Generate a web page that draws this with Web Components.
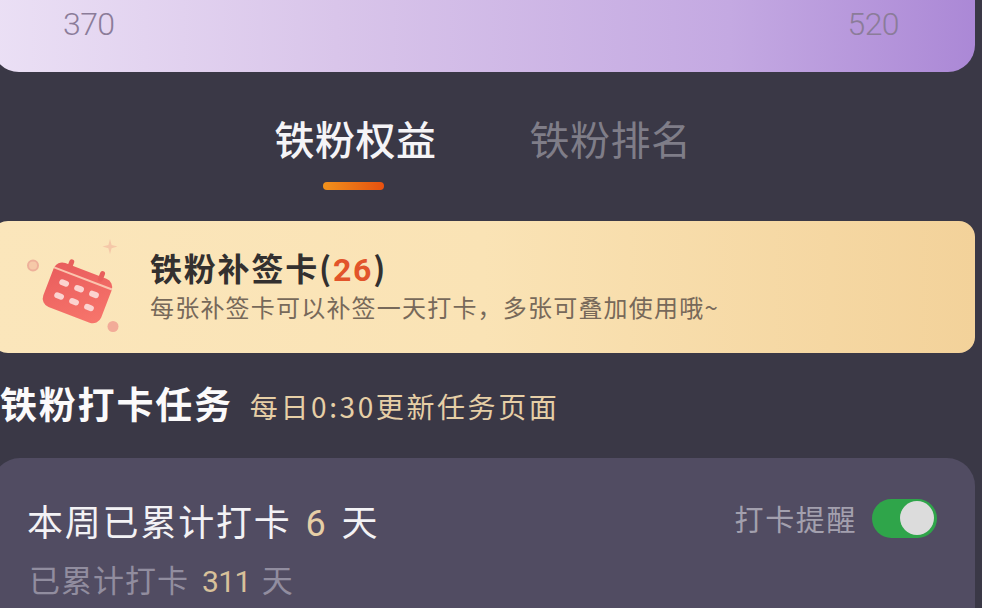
<!DOCTYPE html>
<html lang="zh">
<head>
<meta charset="utf-8">
<title>铁粉权益</title>
<style>
  html, body { margin: 0; height: 608px; overflow: hidden; background: #3a3846; }
  body { font-family: "Noto Sans CJK SC", "Noto Sans", sans-serif; }
  fan-page { width: 982px; height: 608px; }
</style>
</head>
<body>
<fan-page>
  <level-card start="370" end="520"></level-card>
  <tab-bar>
    <tab-item active>铁粉权益</tab-item>
    <tab-item>铁粉排名</tab-item>
  </tab-bar>
  <perk-banner count="26" text="每张补签卡可以补签一天打卡，多张可叠加使用哦~">铁粉补签卡</perk-banner>
  <task-heading note="每日0:30更新任务页面">铁粉打卡任务</task-heading>
  <checkin-card week="6" total="311"></checkin-card>
</fan-page>

<script>
class FanPage extends HTMLElement {
    constructor() {
        super();
        this.attachShadow({mode: 'open'});
        this.shadowRoot.innerHTML = `
            <style>
                :host {
                    display: flex;
                    flex-direction: column;
                    overflow: hidden;
                    color: #fff;
                }
            </style>
            <slot></slot>
        `;
    }
}

class LevelCard extends HTMLElement {
    constructor() {
        super();
        this.attachShadow({mode: 'open'});
        this.shadowRoot.innerHTML = `
            <style>
                :host {
                    display: flex;
                    justify-content: space-between;
                    flex: none;
                    box-sizing: border-box;
                    height: 72px;
                    width: 983px;
                    margin-left: -8px;
                    padding: 6px 76px 0 71px;
                    border-radius: 0 0 27px 27px;
                    background: linear-gradient(90deg, #ebe0f5 0%, #d9c5ea 35%, #c4a9e2 75%, #ab88d6 100%);
                    font: 300 32px/36px Roboto, sans-serif;
                    letter-spacing: -0.6px;
                    color: #8b7c99;
                }
            </style>
            <span id="a"></span><span id="b"></span>
        `;
        this.shadowRoot.getElementById('a').textContent = this.getAttribute('start');
        this.shadowRoot.getElementById('b').textContent = this.getAttribute('end');
    }
}

class TabBar extends HTMLElement {
    constructor() {
        super();
        this.attachShadow({mode: 'open'});
        this.shadowRoot.innerHTML = `
            <style>
                :host {
                    display: flex;
                    flex: none;
                    justify-content: center;
                    gap: 93px;
                    height: 149px;
                    padding: 43px 0 0 0;
                    box-sizing: border-box;
                    margin-left: -16px;
                }
            </style>
            <slot></slot>
        `;
    }
}

class TabItem extends HTMLElement {
    constructor() {
        super();
        this.attachShadow({mode: 'open'});
        this.shadowRoot.innerHTML = `
            <style>
                :host {
                    display: flex;
                    flex-direction: column;
                    align-items: center;
                    font-size: 40px;
                    line-height: 46px;
                    letter-spacing: 0.5px;
                    color: #7f7d88;
                }
                :host([active]) {
                    color: #f5f4f7;
                    font-weight: 500;
                }
                i {
                    display: none;
                    width: 61px;
                    height: 8px;
                    margin: 21px 0 0 -4px;
                    border-radius: 4px;
                    background: linear-gradient(90deg, #f0921c, #e8500f);
                }
                :host([active]) i {
                    display: block;
                }
            </style>
            <slot></slot>
            <i></i>
        `;
    }
}

class PerkBanner extends HTMLElement {
    constructor() {
        super();
        this.attachShadow({mode: 'open'});
        this.shadowRoot.innerHTML = `
            <style>
                :host {
                    display: flex;
                    flex: none;
                    align-items: center;
                    box-sizing: border-box;
                    height: 132px;
                    width: 983px;
                    margin-left: -8px;
                    padding-left: 32px;
                    gap: 26px;
                    border-radius: 16px;
                    background: linear-gradient(90deg, #fbe6bb 0%, #fae3b5 50%, #f3d29a 100%);
                }
                svg {
                    flex: none;
                    width: 100px;
                    height: 100px;
                    filter: blur(0.4px);
                }
                .title {
                    font-size: 32px;
                    line-height: 40px;
                    font-weight: 700;
                    letter-spacing: 1.8px;
                    color: #33302f;
                    margin-top: -4px;
                }
                .title b {
                    color: #e2542a;
                    font-family: Roboto, sans-serif;
                    font-weight: 700;
                }
                .text {
                    margin-top: 1px;
                    font-size: 24px;
                    line-height: 32px;
                    letter-spacing: 1.2px;
                    color: #77695a;
                }
            </style>
            <svg viewBox="0 0 100 100">
                <defs>
                    <linearGradient id="cal" x1="0" y1="0" x2="1" y2="1">
                        <stop offset="0" stop-color="#e85c5c"/>
                        <stop offset="1" stop-color="#f8766c"/>
                    </linearGradient>
                </defs>
                <circle cx="9" cy="28.5" r="5" fill="#f6c9a8" stroke="#eeb09a" stroke-width="2"/>
                <path d="M86 2l1.6 6 6 1.6-6 1.6-1.6 6-1.6-6-6-1.6 6-1.6z" fill="#f5c8a8"/>
                <circle cx="89" cy="89.5" r="5.5" fill="#f2ab98"/>
                <g transform="translate(0 6.5) rotate(21 54 48)">
                    <rect x="23" y="26" width="62" height="47" rx="9" fill="url(#cal)"/>
                    <rect x="35" y="20" width="5" height="11" rx="2.5" fill="#e8605c"/>
                    <rect x="68" y="20" width="5" height="11" rx="2.5" fill="#e8605c"/>
                    <rect x="23" y="33" width="62" height="2" fill="#fbc4ae"/>
                    <g fill="#fbd3d0">
                        <rect x="33" y="42" width="10" height="6" rx="3"/>
                        <rect x="49" y="42" width="10" height="6" rx="3"/>
                        <rect x="65" y="42" width="10" height="6" rx="3"/>
                        <rect x="33" y="56" width="10" height="6" rx="3"/>
                        <rect x="49" y="56" width="10" height="6" rx="3"/>
                        <rect x="65" y="56" width="10" height="6" rx="3"/>
                    </g>
                </g>
            </svg>
            <div>
                <div class="title"><slot></slot>(<b id="count"></b>)</div>
                <div class="text" id="text"></div>
            </div>
        `;
        this.shadowRoot.getElementById('count').textContent = this.getAttribute('count');
        this.shadowRoot.getElementById('text').textContent = this.getAttribute('text');
    }
}

class TaskHeading extends HTMLElement {
    constructor() {
        super();
        this.attachShadow({mode: 'open'});
        this.shadowRoot.innerHTML = `
            <style>
                :host {
                    display: flex;
                    flex: none;
                    align-items: center;
                    gap: 17px;
                    height: 105px;
                    box-sizing: border-box;
                    padding-bottom: 5px;
                }
                .main {
                    font-size: 37px;
                    font-weight: 700;
                    letter-spacing: 1.8px;
                    color: #fbfafb;
                }
                .note {
                    font-size: 28px;
                    letter-spacing: 2.6px;
                    color: #e6cfa6;
                    padding-top: 5px;
                }
            </style>
            <span class="main"><slot></slot></span>
            <span class="note" id="note"></span>
        `;
        this.shadowRoot.getElementById('note').textContent = this.getAttribute('note');
    }
}

class ToggleSwitch extends HTMLElement {
    constructor() {
        super();
        this.attachShadow({mode: 'open'});
        this.shadowRoot.innerHTML = `
            <style>
                :host {
                    display: flex;
                    align-items: center;
                    justify-content: flex-end;
                    box-sizing: border-box;
                    width: 65px;
                    height: 39px;
                    padding-right: 3px;
                    border-radius: 20px;
                    background: #2fa54a;
                }
                i {
                    width: 34px;
                    height: 34px;
                    border-radius: 50%;
                    background: #dcdcdc;
                }
            </style>
            <i></i>
        `;
    }
}

class CheckinCard extends HTMLElement {
    constructor() {
        super();
        this.attachShadow({mode: 'open'});
        this.shadowRoot.innerHTML = `
            <style>
                :host {
                    display: flex;
                    flex: none;
                    justify-content: space-between;
                    align-items: flex-start;
                    box-sizing: border-box;
                    height: 200px;
                    width: 983px;
                    margin-left: -8px;
                    padding: 39px 38px 0 35px;
                    border-radius: 28px 28px 0 0;
                    background: #514c62;
                }
                .week {
                    margin-top: -1px;
                    font-size: 36px;
                    line-height: 48px;
                    letter-spacing: 1.8px;
                    color: #f3f2f5;
                }
                .total {
                    margin: 9px 0 0 2px;
                    font-size: 31px;
                    line-height: 44px;
                    letter-spacing: 1px;
                    color: #918d9f;
                }
                em {
                    font-style: normal;
                    color: #e6cfa6;
                    font-family: Roboto, sans-serif;
                    margin: 0 4px;
                }
                .total em {
                    margin: 0 3px 0 5px;
                    font-size: 30px;
                    letter-spacing: -0.6px;
                    color: #d8c19a;
                }
                .remind {
                    display: flex;
                    align-items: center;
                    gap: 15px;
                    font-size: 29px;
                    letter-spacing: 1.6px;
                    color: #a3a0ae;
                }
            </style>
            <div>
                <div class="week">本周已累计打卡 <em id="w"></em> 天</div>
                <div class="total">已累计打卡 <em id="t"></em> 天</div>
            </div>
            <div class="remind">打卡提醒<toggle-switch></toggle-switch></div>
        `;
        this.shadowRoot.getElementById('w').textContent = this.getAttribute('week');
        this.shadowRoot.getElementById('t').textContent = this.getAttribute('total');
    }
}

customElements.define('fan-page', FanPage);
customElements.define('level-card', LevelCard);
customElements.define('tab-bar', TabBar);
customElements.define('tab-item', TabItem);
customElements.define('perk-banner', PerkBanner);
customElements.define('task-heading', TaskHeading);
customElements.define('toggle-switch', ToggleSwitch);
customElements.define('checkin-card', CheckinCard);
</script>
</body>
</html>
